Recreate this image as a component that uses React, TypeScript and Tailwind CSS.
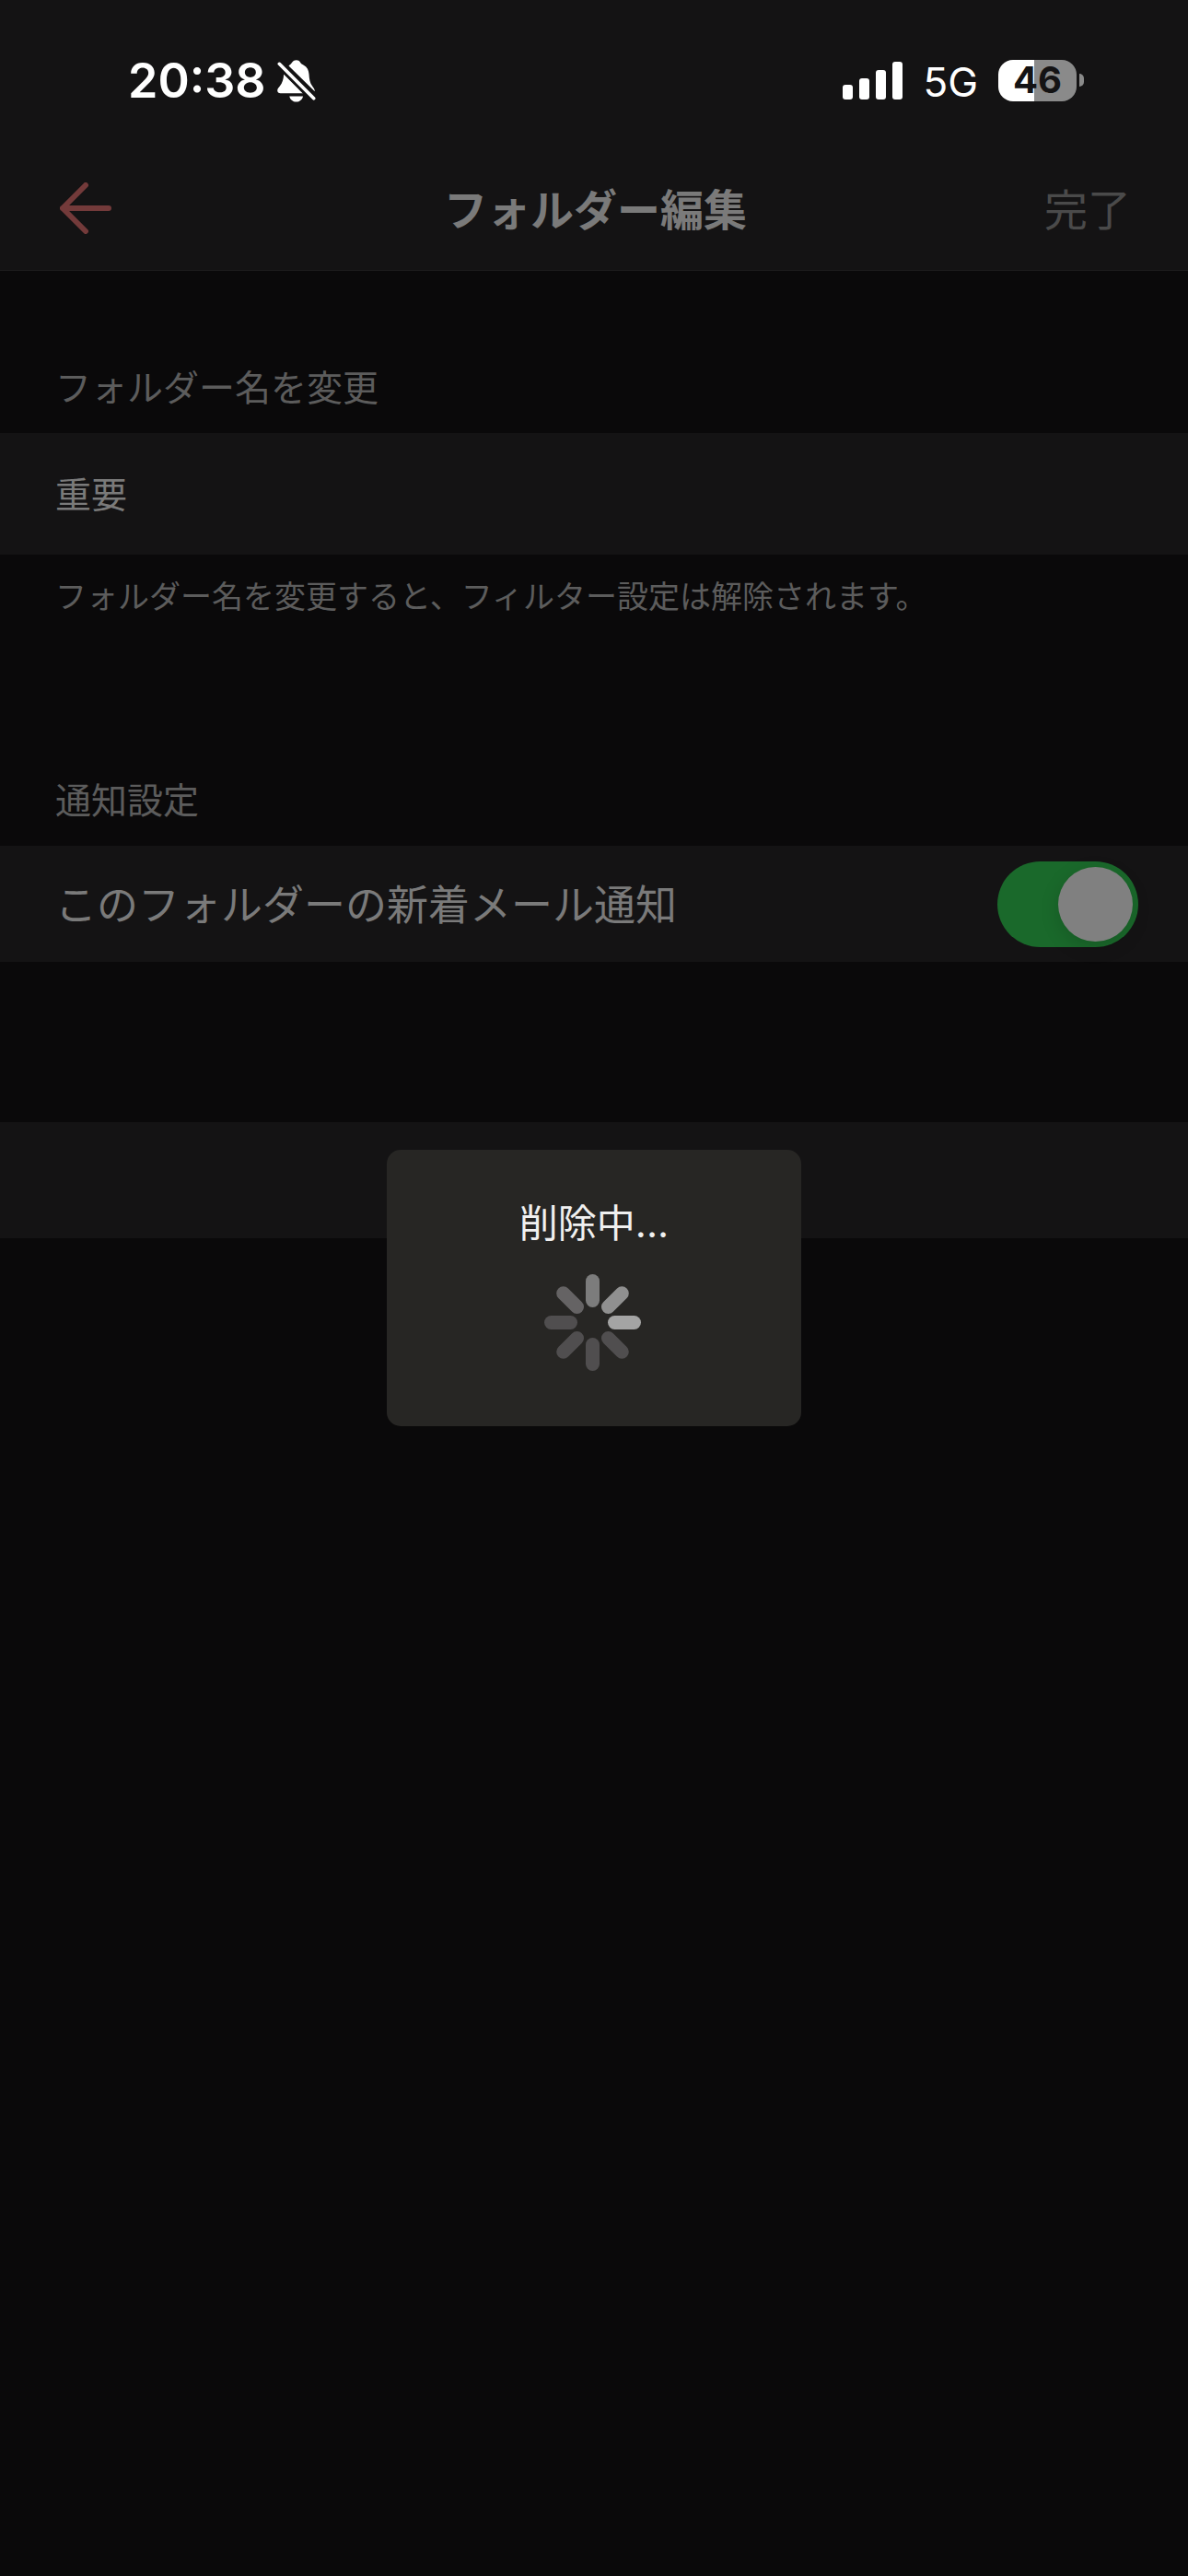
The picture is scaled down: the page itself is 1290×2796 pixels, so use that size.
import React, { useState } from 'react';

// Spoke colours, clockwise from the top
const SPOKES = ['#7c7c7c', '#909090', '#a4a4a4', '#504e4f', '#504e4f', '#504e4f', '#504e4f', '#656364'];

const BellOffIcon = () => (
  <svg width="42" height="46" viewBox="0 0 42 46" fill="none" aria-hidden="true">
    <path
      d="M12.5 6.5C14.5 5 15.3 4 16.3 2.6C17.5 1 19 0.3 20.7 0.3C22.6 0.3 24 1.1 25.1 2.7C26 4 27 4.8 28.8 5.8C32.6 7.9 34.2 11.2 34.5 15.5C34.8 21 35.6 25 38 28.2C39.8 30.6 40.8 32 40.8 34.3Z"
      fill="white"
    />
    <path
      d="M7.2 15.5L28 36.3H3.6C1.6 36.3 0.2 35 0.2 33.2C0.2 31.6 1.4 30.3 3 28.3C5.6 25 6.8 21.3 7.2 15.5Z"
      fill="white"
    />
    <path d="M13.3 39.5H28C27.4 43 24.4 45.6 20.7 45.6C16.9 45.6 13.9 43 13.3 39.5Z" fill="white" />
    <path d="M2.5 4.5L39.5 41.8" stroke="#141314" strokeWidth="9" />
    <path d="M2.3 4.3L39.7 41.8" stroke="white" strokeWidth="3.6" strokeLinecap="round" />
  </svg>
);

const SignalIcon = () => (
  <svg width="65" height="41" viewBox="0 0 65 41" fill="white" aria-hidden="true">
    <rect x="0" y="25" width="11" height="16" rx="3" />
    <rect x="18" y="18" width="11" height="23" rx="3" />
    <rect x="36" y="9" width="11" height="32" rx="3" />
    <rect x="54" y="0" width="11" height="41" rx="3" />
  </svg>
);

const StatusBar = () => (
  <div className="flex h-[174px] items-center justify-between pl-[139px] pr-[113px] text-white">
    <div className="flex items-center gap-3 pt-[2px]">
      <span className="text-[52px] font-semibold leading-none">20:38</span>
      <BellOffIcon />
    </div>
    <div className="flex items-center gap-[22px]">
      <SignalIcon />
      <span className="pt-[4px] text-[44px] leading-none">5G</span>
      <div className="flex items-center gap-[3px]">
        <div className="flex h-[45px] w-[85px] items-center justify-center rounded-[16px] bg-[linear-gradient(90deg,#fff_46%,#8a8a8a_46%)] text-[40px] font-bold leading-none text-[#141314]">
          46
        </div>
        <div className="h-[14px] w-[5px] rounded-r-full bg-[#8a8a8a]" />
      </div>
    </div>
  </div>
);

const Spinner = () => (
  <svg width="108" height="105" viewBox="0 0 108 105" aria-hidden="true">
    {SPOKES.map((color, index) => (
      <rect
        key={index}
        x="45"
        y="0"
        width="15"
        height="36"
        rx="7.5"
        fill={color}
        transform={`rotate(${index * 45} 52.5 52.5)`}
      />
    ))}
  </svg>
);

const App = () => {
  const [folderName, setFolderName] = useState('重要');
  const [notify, setNotify] = useState(true);

  return (
    <div
      lang="ja"
      className="min-h-screen bg-[#0a090a] font-['Inter','Noto_Sans_CJK_JP',sans-serif] text-[39px] text-[#7a7a7a]"
    >
      {/* Header */}
      <header className="border-b border-[#1d1c1d] bg-[#141314]">
        <StatusBar />
        <div className="grid h-[119px] grid-cols-[1fr_auto_1fr] items-center pl-[65px] pr-[62px] pb-[15px]">
          <button type="button" aria-label="戻る" className="justify-self-start">
            <svg width="56" height="56" viewBox="0 0 56 56" fill="none" stroke="#733a3a" strokeWidth="6" strokeLinecap="round" strokeLinejoin="round">
              <path d="M28 3L3 28L28 53M3 28H53" />
            </svg>
          </button>
          <h1 className="pt-[2px] text-[47px] font-bold leading-none">フォルダー編集</h1>
          <button type="button" className="justify-self-end pt-[2px] text-[47px] leading-none text-[#4a4a4a]">
            完了
          </button>
        </div>
      </header>

      <main>
        {/* Folder name */}
        <section className="pt-[107px]">
          <label htmlFor="folder-name" className="block px-[60px] pb-[29px] leading-[40px] text-[#5c5c5c]">
            フォルダー名を変更
          </label>
          <input
            id="folder-name"
            type="text"
            value={folderName}
            onChange={(e) => setFolderName(e.target.value)}
            className="block h-[132px] w-full bg-[#141314] px-[60px] pb-[4px] outline-none"
          />
          <p className="px-[60px] pt-[26px] text-[34px] leading-[40px] text-[#5c5c5c]">
            フォルダー名を変更すると、フィルター設定は解除されます。
          </p>
        </section>

        {/* Notifications */}
        <section className="pt-[181px]">
          <h2 className="px-[60px] pb-[29px] leading-[40px] text-[#5c5c5c]">通知設定</h2>
          <div className="flex h-[126px] items-center justify-between bg-[#141314] pl-[60px] pr-[54px]">
            <label htmlFor="notify" className="pt-[2px] text-[45px] leading-none">
              このフォルダーの新着メール通知
            </label>
            <input
              id="notify"
              type="checkbox"
              role="switch"
              checked={notify}
              onChange={(e) => setNotify(e.target.checked)}
              className="flex h-[93px] w-[153px] appearance-none items-center rounded-full bg-[#39383a] p-[6px] before:size-[81px] before:rounded-full before:bg-[#808080] before:shadow-[0_6px_20px_rgba(0,0,0,0.15)] checked:justify-end checked:bg-[#1a692b]"
            />
          </div>
        </section>

        <div className="mt-[174px] h-[126px] bg-[#141314]" />
      </main>

      {/* Progress dialog */}
      <div className="fixed inset-0 flex items-center justify-center">
        <div role="alertdialog" aria-labelledby="progress-label" className="flex h-[300px] w-[450px] flex-col items-center gap-[31px] rounded-[15px] bg-[#272624] pt-[56px]">
          <p id="progress-label" className="text-[42px] leading-[48px] text-[#f0f0f0]">
            削除中...
          </p>
          <Spinner />
        </div>
      </div>
    </div>
  );
};

export default App;
